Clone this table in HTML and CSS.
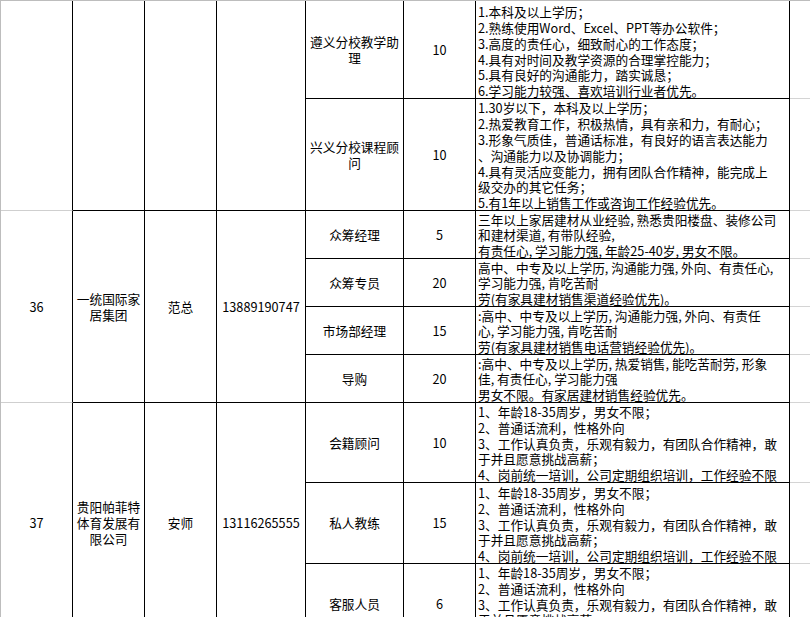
FILE: index.html
```html
<!DOCTYPE html>
<html lang="zh-CN">
<head>
<meta charset="utf-8">
<title>招聘信息表</title>
<link rel="stylesheet" href="styles.css">
</head>
<body>
<div class="sheet">
  <!-- row 35 (continued) -->
  <div class="cell idx span2"></div>
  <div class="cell span2"></div>
  <div class="cell span2"></div>
  <div class="cell span2"></div>
  <div class="cell ctr">遵义分校教学助<br>理</div>
  <div class="cell ctr">10</div>
  <div class="cell desc"><div class="txt">1.本科及以上学历；<br>2.熟练使用Word、Excel、PPT等办公软件；<br>3.高度的责任心，细致耐心的工作态度；<br>4.具有对时间及教学资源的合理掌控能力；<br>5.具有良好的沟通能力，踏实诚恳；<br>6.学习能力较强、喜欢培训行业者优先。</div></div>
  <div class="cell pad"></div>

  <div class="cell ctr">兴义分校课程顾<br>问</div>
  <div class="cell ctr">10</div>
  <div class="cell desc"><div class="txt">1.30岁以下，本科及以上学历；<br>2.热爱教育工作，积极热情，具有亲和力，有耐心；<br>3.形象气质佳，普通话标准，有良好的语言表达能力<br>、沟通能力以及协调能力；<br>4.具有灵活应变能力，拥有团队合作精神，能完成上<br>级交办的其它任务；<br>5.有1年以上销售工作或咨询工作经验优先。</div></div>
  <div class="cell pad"></div>

  <!-- row 36 -->
  <div class="cell idx ctr span4">36</div>
  <div class="cell ctr span4">一统国际家<br>居集团</div>
  <div class="cell ctr span4">范总</div>
  <div class="cell ctr span4">13889190747</div>
  <div class="cell ctr">众筹经理</div>
  <div class="cell ctr">5</div>
  <div class="cell desc"><div class="txt">三年以上家居建材从业经验, 熟悉贵阳楼盘、装修公司<br>和建材渠道, 有带队经验,<br>有责任心, 学习能力强, 年龄25-40岁, 男女不限。</div></div>
  <div class="cell pad"></div>

  <div class="cell ctr">众筹专员</div>
  <div class="cell ctr">20</div>
  <div class="cell desc"><div class="txt">高中、中专及以上学历, 沟通能力强, 外向、有责任心,<br>学习能力强, 肯吃苦耐<br>劳(有家具建材销售渠道经验优先)。</div></div>
  <div class="cell pad"></div>

  <div class="cell ctr">市场部经理</div>
  <div class="cell ctr">15</div>
  <div class="cell desc"><div class="txt">:高中、中专及以上学历, 沟通能力强, 外向、有责任<br>心, 学习能力强, 肯吃苦耐<br>劳(有家具建材销售电话营销经验优先)。</div></div>
  <div class="cell pad"></div>

  <div class="cell ctr">导购</div>
  <div class="cell ctr">20</div>
  <div class="cell desc"><div class="txt">:高中、中专及以上学历, 热爱销售, 能吃苦耐劳, 形象<br>佳, 有责任心, 学习能力强<br>男女不限。有家居建材销售经验优先。</div></div>
  <div class="cell pad"></div>

  <!-- row 37 -->
  <div class="cell idx ctr span3">37</div>
  <div class="cell ctr span3">贵阳帕菲特<br>体育发展有<br>限公司</div>
  <div class="cell ctr span3">安师</div>
  <div class="cell ctr span3">13116265555</div>
  <div class="cell ctr">会籍顾问</div>
  <div class="cell ctr">10</div>
  <div class="cell desc"><div class="txt">1、年龄18-35周岁，男女不限；<br>2、普通话流利，性格外向<br>3、工作认真负责，乐观有毅力，有团队合作精神，敢<br>于并且愿意挑战高薪；<br>4、岗前统一培训，公司定期组织培训，工作经验不限</div></div>
  <div class="cell pad"></div>

  <div class="cell ctr">私人教练</div>
  <div class="cell ctr">15</div>
  <div class="cell desc"><div class="txt">1、年龄18-35周岁，男女不限；<br>2、普通话流利，性格外向<br>3、工作认真负责，乐观有毅力，有团队合作精神，敢<br>于并且愿意挑战高薪；<br>4、岗前统一培训，公司定期组织培训，工作经验不限</div></div>
  <div class="cell pad"></div>

  <div class="cell ctr">客服人员</div>
  <div class="cell ctr">6</div>
  <div class="cell desc"><div class="txt">1、年龄18-35周岁，男女不限；<br>2、普通话流利，性格外向<br>3、工作认真负责，乐观有毅力，有团队合作精神，敢<br>于并且愿意挑战高薪；<br>4、岗前统一培训，公司定期组织培训，工作经验不限</div></div>
  <div class="cell pad"></div>
</div>
</body>
</html>
```
FILE: styles.css
```css
html, body {
  margin: 0;
  padding: 0;
  background: #ffffff;
}
body {
  width: 810px;
  height: 617px;
  overflow: hidden;
  font-family: "Noto Sans CJK SC", "Noto Sans", sans-serif;
  font-size: 12.7px;
  color: #000000;
}
.sheet {
  display: grid;
  grid-template-columns: 72px 72px 72px 89px 98px 72px 314px 20px;
  grid-template-rows: 98px 112px 48px 48px 48px 48px 80px 81px 80px;
  border-top: 1px solid #bdbdbd;
  border-left: 1px solid #bdbdbd;
  width: 809px;
}
.cell {
  box-sizing: border-box;
  border-right: 1px solid #000000;
  border-bottom: 1px solid #000000;
  overflow: hidden;
  min-width: 0;
  min-height: 0;
}
.idx {
  border-bottom-color: #cfcfcf;
}
.pad {
  border-right: none;
  border-bottom-color: #d4d4d4;
}
.span2 { grid-row: span 2; }
.span3 { grid-row: span 3; }
.span4 { grid-row: span 4; }
.ctr {
  display: flex;
  align-items: center;
  justify-content: center;
  text-align: center;
  line-height: 16px;
  white-space: nowrap;
}
.desc {
  display: flex;
  flex-direction: column;
  justify-content: flex-end;
  padding-left: 2px;
}
.txt {
  line-height: 15.8px;
  white-space: nowrap;
  margin-bottom: -1px;
}
```
